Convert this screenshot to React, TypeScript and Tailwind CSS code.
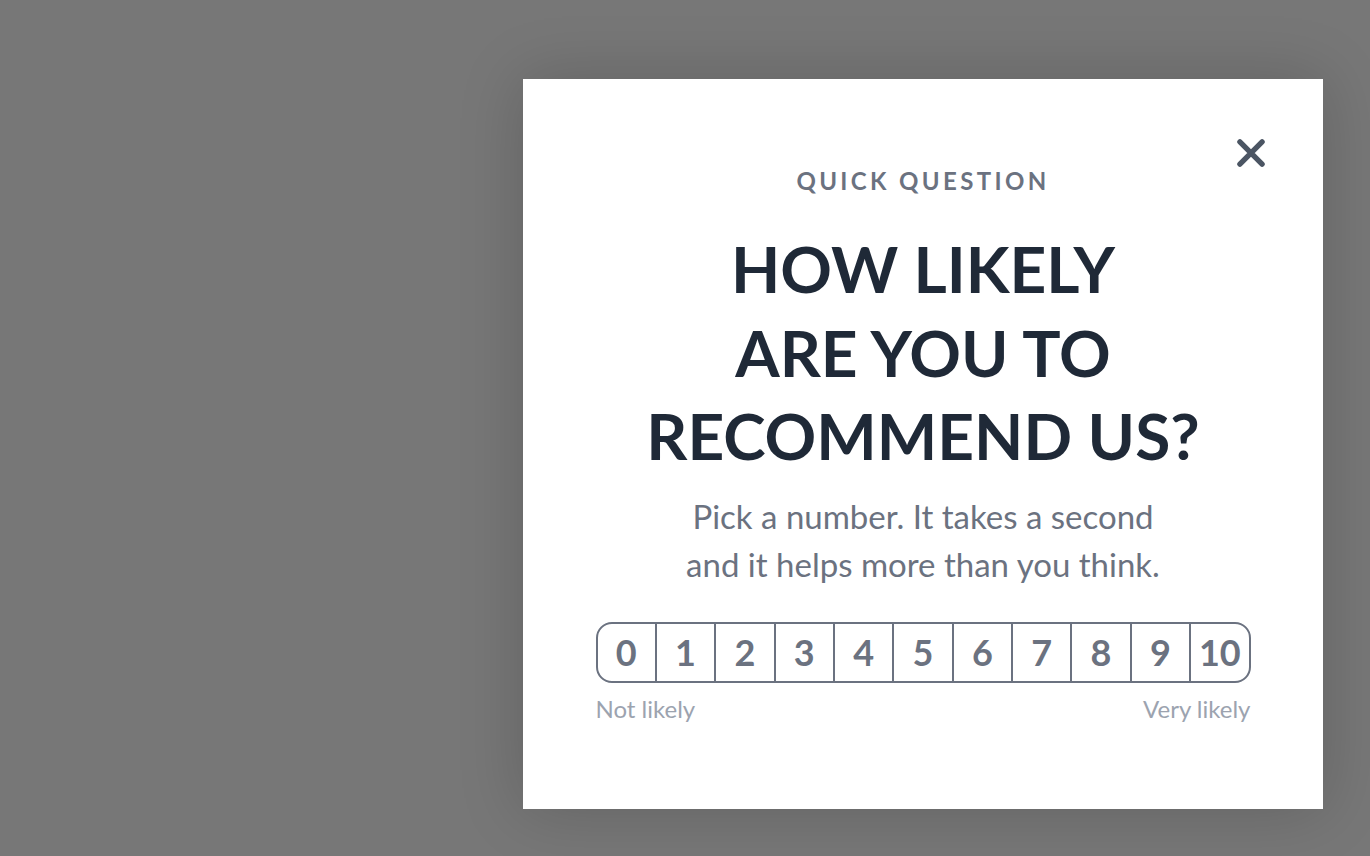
import React from 'react';

const scores = [0, 1, 2, 3, 4, 5, 6, 7, 8, 9, 10];

export default function App() {
    return (
        <div
            className="w-[1370px] h-[856px] bg-[#777777] flex justify-end items-start pt-[79px] pr-[47px] overflow-hidden"
            style={{ fontFamily: 'Lato, "Noto Sans", sans-serif' }}
        >
            <div className="relative w-[800px] h-[730px] bg-white shadow-[0_0_60px_rgba(0,0,0,0.18)] flex flex-col items-center pt-[88px]">
                <button className="absolute right-[52px] top-[54px] w-[40px] h-[40px] flex items-center justify-center text-[#4b5563]">
                    <svg width="38" height="38" viewBox="0 0 24 24" fill="none" stroke="currentColor" strokeWidth="3.4" strokeLinecap="round">
                        <path d="M5 5L19 19M19 5L5 19" />
                    </svg>
                </button>

                <div className="mt-[2px] text-[24px] leading-none font-bold tracking-[0.14em] text-[#6b7280]">QUICK QUESTION</div>

                <h1 className="mt-[34px] text-center text-[64px] leading-[83.5px] font-bold text-[#1f2937]">
                    HOW LIKELY
                    <br />
                    ARE YOU TO
                    <br />
                    RECOMMEND US?
                </h1>

                <p className="mt-[14px] text-center text-[33px] leading-[48px] text-[#6b7280]">
                    Pick a number. It takes a second
                    <br />
                    and it helps more than you think.
                </p>

                <div className="mt-[34px] w-[655px]">
                    <div className="flex h-[61px] border-2 border-[#6b7280] rounded-[16px] overflow-hidden">
                        {scores.map((n) => (
                            <button
                                key={n}
                                className="flex-1 flex items-center justify-center text-[36px] font-bold text-[#6b7280] border-l-2 border-[#6b7280] first:border-l-0"
                            >
                                {n}
                            </button>
                        ))}
                    </div>
                    <div className="mt-[11px] flex justify-between text-[24px] leading-[30px] text-[#9ca3af]">
                        <span>Not likely</span>
                        <span>Very likely</span>
                    </div>
                </div>
            </div>
        </div>
    );
}
